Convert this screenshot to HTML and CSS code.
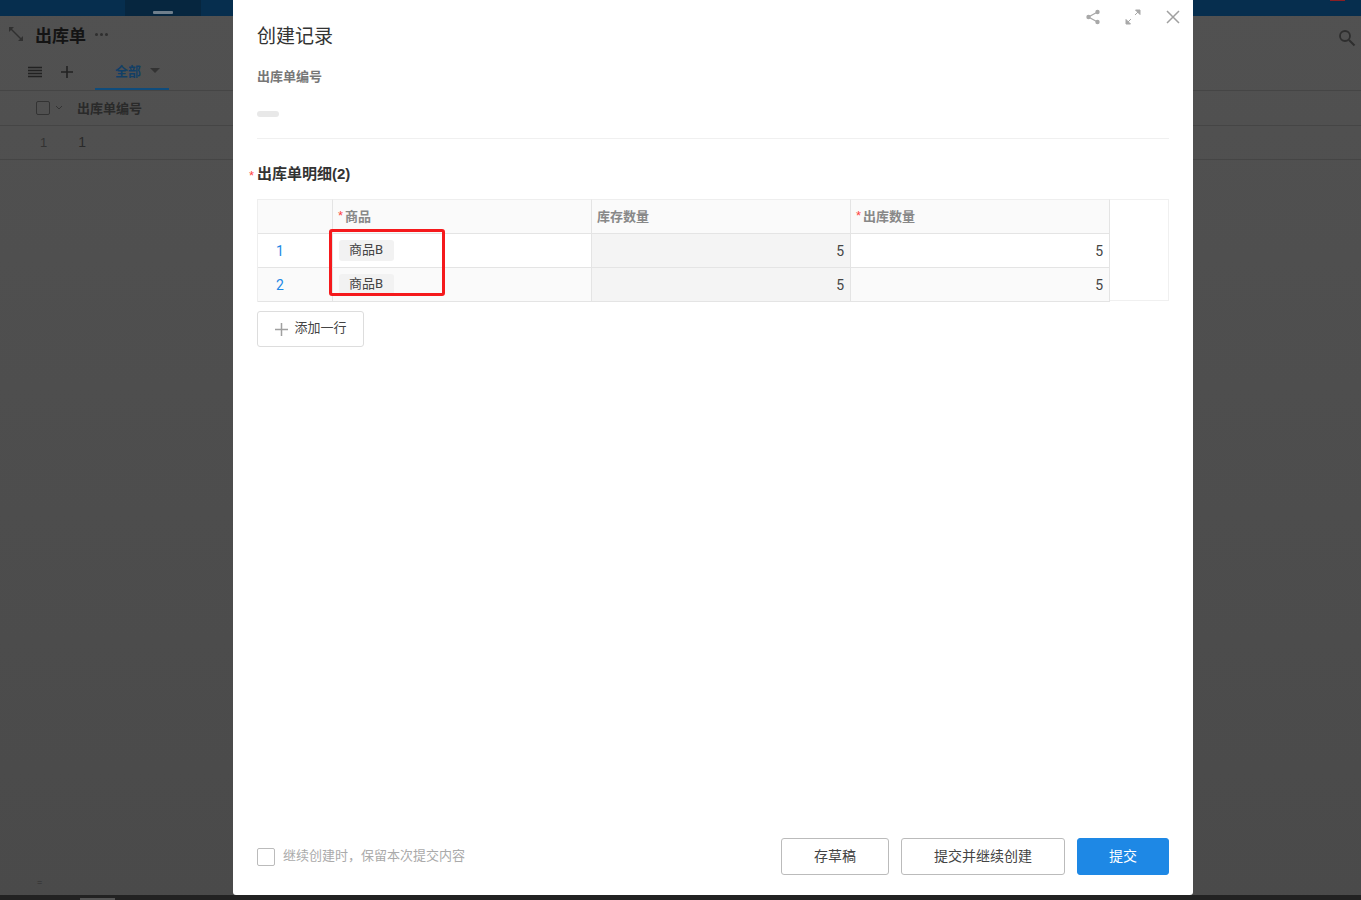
FILE: index.html
```html
<!DOCTYPE html>
<html lang="zh-CN">
<head>
<meta charset="utf-8">
<title>创建记录</title>
<link rel="stylesheet" href="styles.css">
</head>
<body>
<div class="page">
  <div class="topbar"><div class="topbar-tab"><span class="tab-dash"></span></div><span class="top-badge"></span></div>
  <div class="head">
    <svg class="ic-resize" viewBox="0 0 16 16" width="16" height="16"><path d="M2 2l12 12" fill="none" stroke="#303030" stroke-width="1.400"/><path d="M1 1h5L1 6zM15 15h-5l5-5z" fill="#303030"/></svg>
    <span class="head-title">出库单</span>
    <span class="head-more"><i></i><i></i><i></i></span>
    <svg class="ic-search" viewBox="0 0 18 18" width="18" height="18"><circle cx="7" cy="7" r="5" fill="none" stroke="#2e2e2e" stroke-width="1.800"/><path d="M11 11l5.500 5.500" stroke="#2e2e2e" stroke-width="2"/></svg>
  </div>
  <div class="tabs">
    <svg class="ic-menu" viewBox="0 0 14 12" width="14" height="12"><path d="M0 1.500h14M0 4.500h14M0 7.500h14M0 10.500h14" stroke="#222" stroke-width="1.300"/></svg>
    <svg class="ic-plus" viewBox="0 0 12 12" width="12" height="12"><path d="M6 0v12M0 6h12" stroke="#222" stroke-width="1.600"/></svg>
    <div class="tab-active"><span>全部</span><i class="caret"></i></div>
  </div>
  <div class="list-row list-header">
    <span class="bg-check"></span>
    <svg class="ic-chev" viewBox="0 0 8 5" width="8" height="5"><path d="M1 1l3 3 3-3" fill="none" stroke="#333" stroke-width="1"/></svg>
    <span class="list-col">出库单编号</span>
  </div>
  <div class="list-row list-body">
    <span class="list-idx">1</span>
    <span class="list-val">1</span>
  </div>
  <div class="page-fill"><span class="page-foot">=</span></div>
  <div class="bottom-strip"><span class="strip-mark"></span></div>
</div>

<div class="modal">
  <div class="modal-tools">
    <svg viewBox="0 0 16 16" width="16" height="16"><path d="M12.500 3L3.500 8l9 5" fill="none" stroke="#a8a8a8" stroke-width="1.300"/><circle cx="12.500" cy="3" r="2.200" fill="#a8a8a8"/><circle cx="3.500" cy="8" r="2.200" fill="#a8a8a8"/><circle cx="12.500" cy="13" r="2.200" fill="#a8a8a8"/></svg>
    <svg viewBox="0 0 16 16" width="16" height="16"><path d="M10 6l5-5M15 1h-4.500L15 5.500zM6 10l-5 5M1 15h4.500L1 10.500z" fill="#a8a8a8" stroke="#a8a8a8" stroke-width="1"/></svg>
    <svg viewBox="0 0 16 16" width="16" height="16"><path d="M2 2l12 12M14 2L2 14" stroke="#a0a0a0" stroke-width="1.500"/></svg>
  </div>
  <h1 class="modal-title">创建记录</h1>
  <div class="field-label">出库单编号</div>
  <div class="placeholder-bar"></div>
  <div class="divider"></div>
  <div class="section-label"><span class="req">*</span>出库单明细(2)</div>
  <div class="table-wrap">
    <div class="grid">
      <div class="cell head-cell"></div>
      <div class="cell head-cell"><span class="req-sm">*</span>商品</div>
      <div class="cell head-cell">库存数量</div>
      <div class="cell head-cell"><span class="req-sm">*</span>出库数量</div>

      <div class="cell idx">1</div>
      <div class="cell"><span class="tag">商品B</span></div>
      <div class="cell num locked">5</div>
      <div class="cell num">5</div>

      <div class="cell idx alt">2</div>
      <div class="cell alt"><span class="tag">商品B</span></div>
      <div class="cell num locked">5</div>
      <div class="cell num alt">5</div>
    </div>
    <div class="highlight"></div>
  </div>
  <button class="add-row" type="button">
    <svg viewBox="0 0 13 13" width="13" height="13"><path d="M6.500 0v13M0 6.500h13" stroke="#a0a0a0" stroke-width="1.500"/></svg>
    <span>添加一行</span>
  </button>
  <div class="modal-footer">
    <label class="keep"><span class="keep-box"></span><span class="keep-text">继续创建时，保留本次提交内容</span></label>
    <div class="actions">
      <button class="btn btn-draft" type="button">存草稿</button>
      <button class="btn btn-next" type="button">提交并继续创建</button>
      <button class="btn btn-primary" type="button">提交</button>
    </div>
  </div>
</div>
</body>
</html>
```
FILE: styles.css
```css
* { box-sizing: border-box; }
html, body { margin: 0; height: 100%; overflow: hidden; }
body {
  font-family: "Liberation Sans", "Noto Sans CJK SC", sans-serif;
  color: #333;
  position: relative;
  width: 1361px;
  height: 900px;
}
.page { height: 900px; background: linear-gradient(#515151, #4a4a4a); display: flex; flex-direction: column; }
.topbar { height: 16px; background: #062e4e; padding-left: 125px; position: relative; flex: none; }
.topbar-tab { width: 76px; height: 16px; background: #06263f; display: flex; justify-content: center; align-items: flex-end; padding-bottom: 2px; }
.tab-dash { width: 20px; height: 3px; background: #6f7f8c; border-radius: 1px; }
.top-badge { position: absolute; left: 1330px; top: 0; width: 15px; height: 1px; background: #8a1f24; }
.head { height: 39px; display: flex; align-items: center; padding: 0 5px 3px 8px; flex: none; }
.head-title { font-size: 17px; font-weight: 700; margin-left: 11px; color: #141414; }
.head-more { display: flex; gap: 2px; margin-left: 9px; }
.head-more i { width: 3px; height: 3px; border-radius: 50%; background: #2f2f2f; }
.ic-search { margin-left: auto; margin-top: 7px; }
.tabs { height: 36px; display: flex; align-items: center; padding-left: 28px; padding-bottom: 1px; border-bottom: 1px solid #454545; flex: none; position: relative; }
.ic-plus { margin-left: 19px; }
.tab-active { position: absolute; left: 95px; top: 0; width: 74px; height: 35px; border-bottom: 2px solid #0f4c7c; color: #123f66; font-size: 13px; font-weight: 700; display: flex; align-items: center; padding: 0 0 2px 20px; }
.caret { width: 0; height: 0; margin-left: 9px; border: 5px solid transparent; border-top: 5px solid #333; border-bottom: 0; }
.list-row { height: 34px; display: flex; align-items: center; border-bottom: 1px solid #454545; font-size: 14px; flex: none; color: #2a2a2a; }
.list-header { height: 35px; padding-bottom: 1px; }
.list-body { padding-bottom: 1px; }
.bg-check { width: 14px; height: 14px; border: 1px solid #333; border-radius: 2px; margin-left: 36px; }
.ic-chev { margin-left: 5px; }
.list-col { margin-left: 14px; font-weight: 700; font-size: 13px; color: #2a2a2a; }
.list-idx { margin-left: 40px; color: #333; font-size: 13px; }
.list-val { margin-left: 31px; }
.page-fill { flex: 1; position: relative; }
.page-foot { position: absolute; left: 37px; bottom: 8px; font-size: 9px; color: #2e2e2e; }
.bottom-strip { height: 5px; background: #222; flex: none; position: relative; }
.strip-mark { position: absolute; left: 80px; top: 3px; width: 35px; height: 2px; background: #555; }

.modal { position: absolute; left: 233px; top: 0; width: 960px; height: 895px; background: #fff; border-radius: 0 0 3px 3px; padding: 0 24px; display: flex; flex-direction: column; }
.modal-tools { position: absolute; right: 12px; top: 9px; display: flex; gap: 24px; }
.modal-title { font-size: 19px; font-weight: 400; color: #333; margin: 0; padding-top: 23px; line-height: 28px; }
.field-label { font-size: 13px; font-weight: 700; color: #777; margin-top: 17px; line-height: 18px; }
.placeholder-bar { width: 22px; height: 6px; background: #e8e8e8; border-radius: 3px; margin-top: 25px; }
.divider { height: 1px; background: #f0f0f0; margin-top: 21px; flex: none; }
.section-label { position: relative; font-size: 15px; font-weight: 700; color: #333; margin-top: 26px; line-height: 18px; }
.req { position: absolute; left: -8px; top: 2px; color: #f44; font-size: 13px; font-weight: 400; }
.table-wrap { position: relative; margin-top: 16px; border: 1px solid #f0f0f0; border-width: 1px 1px 1px 0; height: 102px; flex: none; }
.grid { display: grid; grid-template-columns: 75px 259px 259px 259px; grid-template-rows: 35px 34px 34px; width: 852px; margin-top: -1px; border-left: 1px solid #eee; }
.cell { border-right: 1px solid #e4e4e4; border-bottom: 1px solid #e4e4e4; font-size: 12px; display: flex; align-items: center; padding: 0 6px 0 5px; color: #444; }
.head-cell { background: #fafafa; font-weight: 700; font-size: 13px; color: #888; border-top: 1px solid #eee; padding: 0 5px 3px; }
.req-sm { color: #f44; font-size: 13px; font-weight: 400; margin-right: 2px; }
.idx { justify-content: center; color: #1e88e5; font-size: 14px; padding: 0 30px 0 0; font-family: Roboto, sans-serif; }
.alt { background: #fafafa; }
.num { justify-content: flex-end; font-size: 14px; font-family: Roboto, sans-serif; }
.locked { background: #f4f4f4; }
.tag { background: #f2f2f2; height: 21px; line-height: 20px; padding: 0 11px 0 10px; border-radius: 3px; font-size: 13px; color: #444; margin-left: 1px; font-family: Roboto, "Noto Sans CJK SC", sans-serif; }
.highlight { position: absolute; left: 72px; top: 29px; width: 116px; height: 67px; border: 3px solid #f5191c; border-radius: 3px; }
.add-row { width: 107px; height: 36px; margin-top: 10px; background: #fff; border: 1px solid #ddd; border-radius: 3px; display: flex; align-items: center; justify-content: center; gap: 6px; font: 13px "Liberation Sans", "Noto Sans CJK SC", sans-serif; color: #444; padding: 0 0 0 1px; flex: none; }
.add-row span { margin-top: -5px; }
.modal-footer { margin-top: auto; height: 57px; display: flex; justify-content: space-between; align-items: flex-start; flex: none; }
.keep { display: flex; align-items: center; font-size: 13px; color: #aaa; height: 37px; }
.keep-box { width: 18px; height: 18px; border: 1px solid #bbb; border-radius: 2px; margin-right: 8px; }
.keep-text { margin-top: -5px; }
.actions { display: flex; gap: 12px; }
.btn { height: 37px; border: 1px solid #bbb; border-radius: 3px; background: #fff; color: #444; font: 14px "Liberation Sans", "Noto Sans CJK SC", sans-serif; padding: 0 0 4px; }
.btn-draft { width: 108px; }
.btn-next { width: 164px; }
.btn-primary { width: 92px; background: #1e88e5; border-color: #1e88e5; color: #fff; }
```
